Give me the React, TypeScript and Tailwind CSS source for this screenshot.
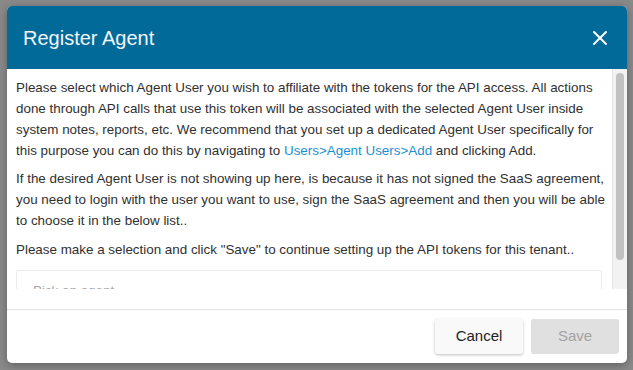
import { useState } from "react";

const font = { fontFamily: '"Liberation Sans", Arial, sans-serif' };

function CloseIcon() {
  return (
    <svg width="16" height="16" viewBox="0 0 16 16" className="text-white">
      <path d="M2 2 L14 14 M14 2 L2 14" stroke="currentColor" strokeWidth="2" strokeLinecap="round" />
    </svg>
  );
}

function Scrollbar() {
  return (
    <div className="w-[15px] shrink-0 bg-[#f2f2f2] border-l border-[#e6e6e6] pt-[4px] pl-[3px] pr-[3px]">
      <div className="h-[187px] rounded-full bg-[#c1c1c1]" />
    </div>
  );
}

export default function App() {
  const [agent, setAgent] = useState("");

  return (
    <div className="w-[633px] h-[370px] bg-[#898989] pt-[6px] pl-[7px]" style={font}>
      <div className="w-[620px] h-[357px] bg-white rounded-[5px] overflow-hidden flex flex-col shadow-[0_2px_8px_rgba(0,0,0,0.3)]">
        <div className="h-[63px] shrink-0 bg-[#016a99] flex items-center justify-between pl-[16px] pr-[19px]">
          <h2 className="text-[20px] text-[#f1f6f9]">Register Agent</h2>
          <button className="flex items-center justify-center">
            <CloseIcon />
          </button>
        </div>

        <div className="h-[220px] shrink-0 flex">
          <div className="flex-1 overflow-hidden pl-[9px] pr-[2px] pt-[8px] text-[13.4px] leading-[21px] text-[#303030]">
            <p className="mb-[7px]">
              Please select which Agent User you wish to affiliate with the tokens for the API access. All actions
              done through API calls that use this token will be associated with the selected Agent User inside
              system notes, reports, etc. We recommend that you set up a dedicated Agent User specifically for
              this purpose you can do this by navigating to{" "}
              <a className="text-[#1b8fd2]">Users&gt;Agent Users&gt;Add</a> and clicking Add.
            </p>
            <p className="mb-[8px]">
              If the desired Agent User is not showing up here, is because it has not signed the SaaS agreement,
              you need to login with the user you want to use, sign the SaaS agreement and then you will be able
              to choose it in the below list..
            </p>
            <p className="mb-[10px]">
              Please make a selection and click "Save" to continue setting up the API tokens for this tenant..
            </p>
            <div className="h-[40px] mr-[8px] border border-[#ececec] rounded-[2px] flex items-center px-[16px] text-[#a8a8a8]">
              {agent || "Pick an agent"}
            </div>
          </div>
          <Scrollbar />
        </div>

        <div className="h-[20px] shrink-0" />

        <div className="flex-1 border-t border-[#e3e3e3] flex items-start justify-end gap-[8px] pt-[9px] pr-[8px]">
          <button
            onClick={() => setAgent("")}
            className="w-[88px] h-[35px] rounded-[3px] bg-[#f9f9f9] text-[15px] text-[#222] shadow-[0_1px_3px_rgba(0,0,0,0.25)]"
          >
            Cancel
          </button>
          <button disabled className="w-[88px] h-[35px] rounded-[3px] bg-[#e0e0e0] text-[15px] text-[#a3a3a3]">
            Save
          </button>
        </div>
      </div>
    </div>
  );
}
